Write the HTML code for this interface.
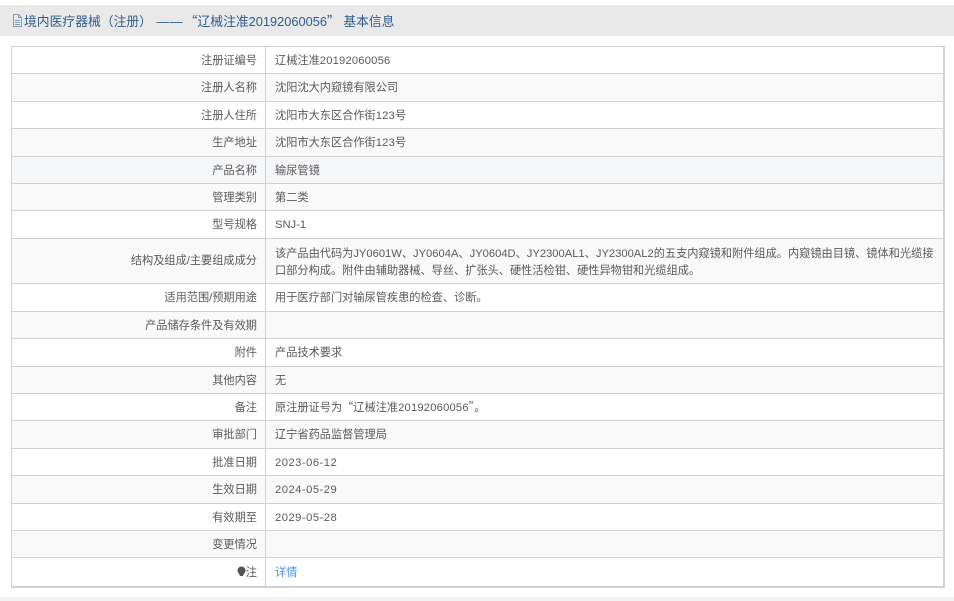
<!DOCTYPE html>
<html lang="zh"><head><meta charset="utf-8"><style>
html,body{margin:0;padding:0;background:#fff;width:954px;height:601px;overflow:hidden}
body{font-family:"Liberation Sans","Noto Sans CJK SC",sans-serif;font-size:11.2px;color:#5a5a5a;position:relative}
.hd{position:absolute;left:0;top:5px;width:954px;height:31px;background:#e9e9e9;color:#2f5d8c;font-size:12.8px;line-height:32px;white-space:nowrap}
.hd svg{position:absolute;left:12px;top:9px}
.hd span.t{position:absolute;left:24px;top:0}
.r{position:absolute;left:11px;width:931px;border:1px solid #d2d2d2;border-width:0 2px 1px 1px;box-sizing:content-box}
.l{position:absolute;left:0;width:245px;text-align:right;white-space:nowrap;line-height:28px}
.v{position:absolute;left:263px;white-space:nowrap;line-height:28px}
.s{position:absolute;left:253px;top:0;bottom:0;width:1px;background:#d2d2d2}
b{font-weight:normal;font-family:"Noto Sans CJK SC",sans-serif}
i{font-style:normal;letter-spacing:.2px}
u{text-decoration:none;letter-spacing:.5px}
</style></head><body>
<div class="hd"><svg width="11" height="13" viewBox="0 0 11 13" fill="none" stroke="#7f9fc0"><path d="M1.500.5h5l3 3v9h-8zM6.500.5v3h3M3 6.500h5M3 8.500h5M3 10.500h5"/></svg><span class="t">境内医疗器械（注册） <span style="letter-spacing:.5px;margin-left:1px;margin-right:-2px">——</span> <b>“</b>辽械注准20192060056<b>”</b> 基本信息</span></div>
<div class="r" style="top:46px;height:26px;background:#fff;border-top-width:1px"><div class="s"></div><div class="l">注册证编号</div><div class="v">辽械注准<i>20192060056</i></div></div>
<div class="r" style="top:74px;height:27px;background:#f9f9f9"><div class="s"></div><div class="l">注册人名称</div><div class="v">沈阳沈大内窥镜有限公司</div></div>
<div class="r" style="top:102px;height:26px;background:#fff"><div class="s"></div><div class="l">注册人住所</div><div class="v">沈阳市大东区合作街<i>123</i>号</div></div>
<div class="r" style="top:129px;height:27px;background:#f9f9f9"><div class="s"></div><div class="l">生产地址</div><div class="v">沈阳市大东区合作街<i>123</i>号</div></div>
<div class="r" style="top:157px;height:26px;background:#f6f7f9"><div class="s"></div><div class="l">产品名称</div><div class="v">输尿管镜</div></div>
<div class="r" style="top:184px;height:26px;background:#f9f9f9"><div class="s"></div><div class="l">管理类别</div><div class="v">第二类</div></div>
<div class="r" style="top:211px;height:27px;background:#fff"><div class="s"></div><div class="l">型号规格</div><div class="v">SNJ-1</div></div>
<div class="r" style="top:239px;height:44px;background:#f9f9f9"><div class="s"></div><div class="l" style="line-height:44px">结构及组成/主要组成成分</div><div class="v" style="top:7px;line-height:17px">该产品由代码为JY0601W、JY0604A、JY0604D、JY2300AL1、JY2300AL2的五支内窥镜和附件组成。内窥镜由目镜、镜体和光缆接<br>口部分构成。附件由辅助器械、导丝、扩张头、硬性活检钳、硬性异物钳和光缆组成。</div></div>
<div class="r" style="top:284px;height:27px;background:#fff"><div class="s"></div><div class="l">适用范围/预期用途</div><div class="v">用于医疗部门对输尿管疾患的检查、诊断。</div></div>
<div class="r" style="top:312px;height:26px;background:#f9f9f9"><div class="s"></div><div class="l">产品储存条件及有效期</div></div>
<div class="r" style="top:339px;height:27px;background:#fff"><div class="s"></div><div class="l">附件</div><div class="v">产品技术要求</div></div>
<div class="r" style="top:367px;height:26px;background:#f9f9f9"><div class="s"></div><div class="l">其他内容</div><div class="v">无</div></div>
<div class="r" style="top:394px;height:26px;background:#fff"><div class="s"></div><div class="l">备注</div><div class="v" style="line-height:26px">原注册证号为<b>“</b>辽械注准<i>20192060056</i><b>”</b>。</div></div>
<div class="r" style="top:421px;height:27px;background:#f9f9f9"><div class="s"></div><div class="l">审批部门</div><div class="v">辽宁省药品监督管理局</div></div>
<div class="r" style="top:449px;height:26px;background:#fff"><div class="s"></div><div class="l">批准日期</div><div class="v"><u>2023-06-12</u></div></div>
<div class="r" style="top:476px;height:27px;background:#f9f9f9"><div class="s"></div><div class="l">生效日期</div><div class="v"><u>2024-05-29</u></div></div>
<div class="r" style="top:504px;height:26px;background:#fff"><div class="s"></div><div class="l">有效期至</div><div class="v"><u>2029-05-28</u></div></div>
<div class="r" style="top:531px;height:26px;background:#f9f9f9"><div class="s"></div><div class="l">变更情况</div></div>
<div class="r" style="top:558px;height:28px;background:#fff;border-bottom-width:2px"><div class="s"></div><div class="l" style="line-height:30px"><svg width="9" height="11" viewBox="0 0 9 11" style="vertical-align:-1px"><path d="M4.500.5a4 4 0 0 1 4 4c0 2-1.700 3-2.500 5.500h-3C2.200 7.500.5 6.500.5 4.500a4 4 0 0 1 4-4z" fill="#555"/></svg>注</div><div class="v" style="line-height:30px;color:#4a90d9">详情</div></div>
<div style="position:absolute;left:0;top:597px;width:954px;height:4px;background:#f3f3f3"></div>
</body></html>
